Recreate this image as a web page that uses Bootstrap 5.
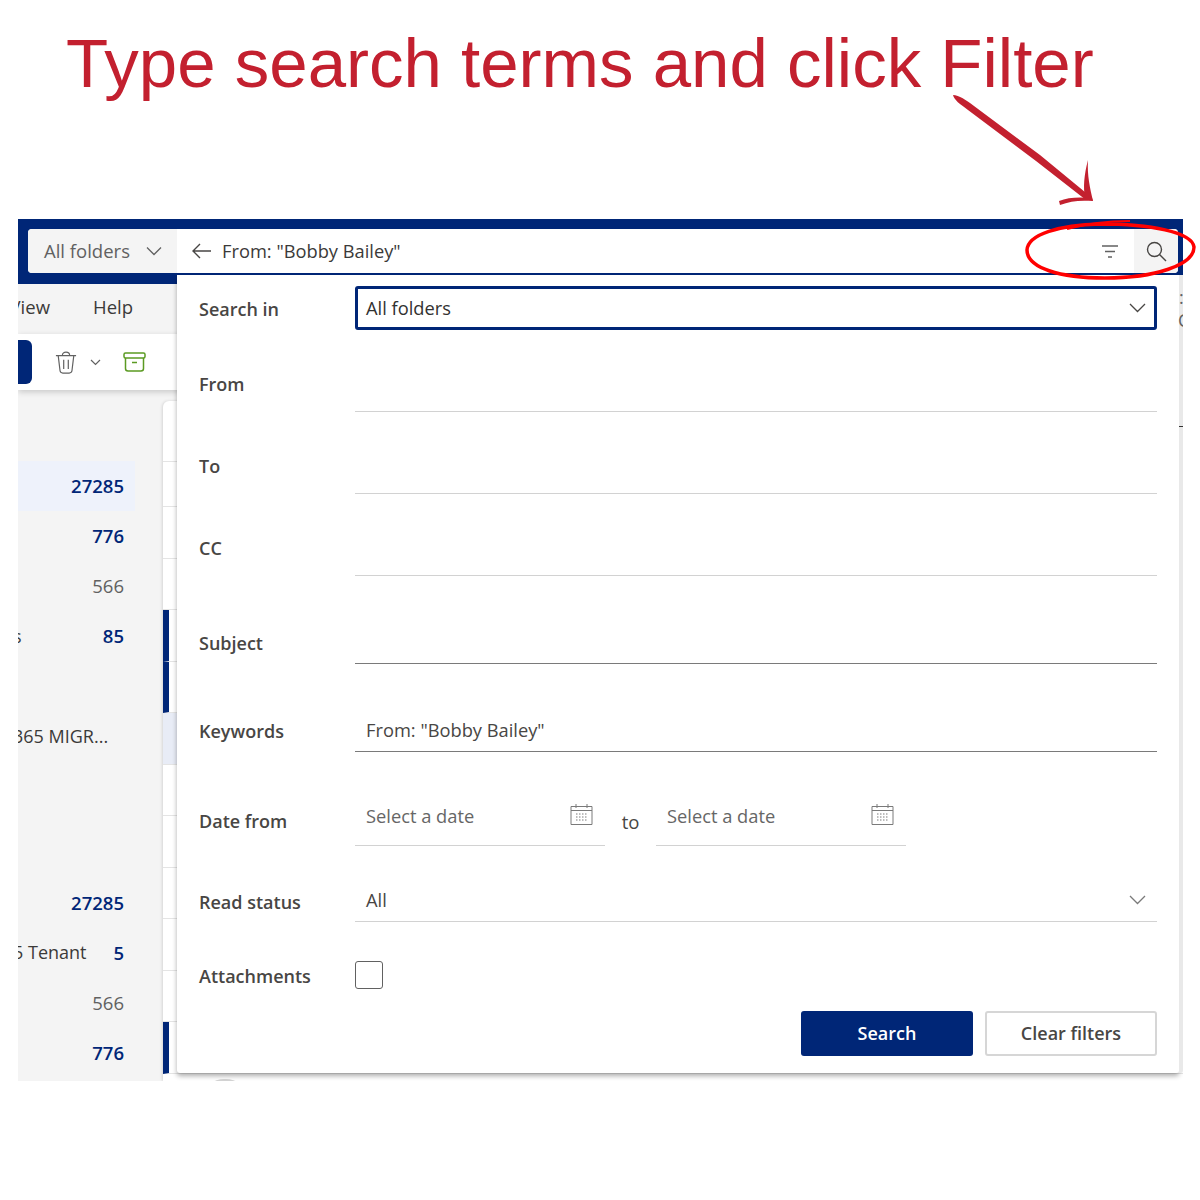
<!DOCTYPE html>
<html lang="en">
<head>
  <meta charset="UTF-8" />
  <meta name="viewport" content="width=device-width, initial-scale=1.0"/>
  <title>Type search terms and click Filter</title>
  <link href="https://cdn.jsdelivr.net/npm/bootstrap@5.3.3/dist/css/bootstrap.min.css" rel="stylesheet"/>
  <style>
    body {
      font-family: "Open Sans", "Noto Sans", sans-serif;
      background: #fff;
      color: #323130;
      height: 1200px;
      overflow: hidden;
    }
    .page-head {
      height: 219px;
      padding: 22px 0 0 66px;
      font-family: "Liberation Sans", Arial, sans-serif;
      font-size: 69px;
      line-height: 84px;
      color: #c3202f;
      white-space: nowrap;
    }
    .app-shot {
      position: relative;
      width: 1165px;
      height: 862px;
      margin-left: 18px;
      overflow: hidden;
      background: #f4f4f4;
    }
    .top-bar {
      height: 65px;
      padding: 10px 5px 11px 10px;
      background: #002677;
    }
    .search-box {
      height: 44px;
      border-radius: 4px;
      overflow: hidden;
      background: #fff;
    }
    .scope-btn {
      width: 149px;
      padding-left: 16px;
      background: #f4f4f4;
      color: #616161;
      font-size: 18.5px;
    }
    .query-text {
      padding-left: 15px;
      font-size: 18.3px;
      color: #3b3a39;
    }
    .query-value { margin-left: 2px; }
    .search-go {
      width: 44px;
      background: #f4f4f4;
    }
    .tab-row {
      height: 50px;
      padding-top: 9px;
      font-size: 18.5px;
      color: #3b3a39;
    }
    .tab-view {
      width: 32px;
      display: flex;
      justify-content: flex-end;
    }
    .tab-help { margin-left: 43px; }
    .tool-row {
      height: 56px;
      background: #fff;
      box-shadow: 0 2px 6px rgba(0, 0, 0, .18);
      position: relative;
    }
    .new-mail {
      width: 14px;
      height: 44px;
      background: #002677;
      border-radius: 0 6px 6px 0;
    }
    .tool-trash { margin-left: 23px; }
    .tool-caret { margin-left: 13px; }
    .tool-archive { margin-left: 22px; }
    .body-row { height: 691px; }
    .folder-pane { width: 145px; padding-top: 70.500px; }
    .folder-item {
      width: 117px;
      height: 50.2px;
      padding-right: 11px;
      font-size: 18px;
      color: #3b3a39;
      white-space: nowrap;
    }
    .folder-item.is-active { background: #eef2fb; }
    .folder-gap { height: 116px; }
    .folder-cut { margin-left: -5px; }
    .folder-tail {
      display: inline-block;
      width: 4px;
      overflow: hidden;
    }
    .unread { color: #002677; font-weight: 600; font-size: 18.5px; }
    .muted-count { color: #616161; font-size: 18.5px; }
    .mail-list {
      margin-top: 11px;
      background: #fff;
      border-radius: 6px 0 0 0;
      box-shadow: -1px 0 3px rgba(0, 0, 0, .12);
    }
    .mail-row {
      height: 51.5px;
      border-bottom: 1px solid #e4e4e4;
    }
    .mail-row.is-tall { height: 61px; }
    .mail-row.is-short { height: 45px; }
    .mail-row.is-flagged { border-left: 6px solid #002677; }
    .mail-row.is-picked { background: #e8ecf6; }
    .peek-arc {
      position: absolute;
      left: 195px;
      top: 860px;
      width: 24px;
      height: 8px;
      border-radius: 50%;
      background: #d4d4d4;
    }
    .edge-bits {
      position: absolute;
      left: 1160px;
      font-size: 18px;
      line-height: 20px;
      color: #616161;
    }
    .edge-top { top: 68px; left: 1161px; }
    .edge-low { top: 91px; }
    .edge-dash {
      position: absolute;
      left: 1161px;
      top: 207px;
      width: 4px;
      height: 1px;
      background: #333;
    }
    .filter-panel {
      position: absolute;
      left: 159px;
      top: 56px;
      width: 1002px;
      height: 798px;
      background: #fff;
      border-radius: 0 0 3px 3px;
      box-shadow: 4px 0 0 #e9e9e9, 0 3px 5px rgba(0, 0, 0, .32);
      padding: 0 22px 0 22px;
    }
    .field-row {
      display: flex;
      align-items: flex-end;
      color: #484644;
    }
    .rh-67 { height: 67px; }
    .rh-70 { height: 70px; }
    .rh-76 { height: 76px; }
    .rh-82 { height: 82px; }
    .rh-88 { height: 88px; }
    .rh-89 { height: 89px; }
    .rh-94 { height: 94px; }
    .field-name {
      width: 156px;
      flex: none;
      font-size: 18px;
      line-height: 28px;
      font-weight: 600;
      color: #484644;
    }
    .lbl-first { padding-bottom: 19px; }
    .lbl-high { padding-bottom: 14px; }
    .lbl-mid { padding-bottom: 11px; }
    .lbl-low { padding-bottom: 7px; }
    .lbl-read { padding-bottom: 6px; }
    .lbl-check { padding-bottom: 21px; }
    .field-main {
      flex: 1;
      align-self: stretch;
      min-width: 0;
      display: flex;
      align-items: center;
      padding: 0 11px;
      font-size: 18.3px;
      border-bottom: 1px solid #d2d2d2;
    }
    .field-main.is-dark { border-bottom-color: #7a7a7a; }
    .field-main.is-focus {
      align-self: flex-start;
      height: 44px;
      margin-top: 11px;
      border: 3px solid #002677;
      border-radius: 3px;
      padding: 0 8px;
      color: #323130;
    }
    .date-input {
      width: 250px;
      flex: none;
      color: #666;
      justify-content: space-between;
      padding-right: 12px;
    }
    .date-sep {
      width: 51px;
      flex: none;
      text-align: center;
      font-size: 18.5px;
      padding-bottom: 10px;
      color: #484644;
    }
    .fake-check {
      width: 28px;
      height: 28px;
      margin-bottom: 22px;
      border: 1.5px solid #616161;
      border-radius: 3px;
    }
    .btn-search, .btn-clear {
      width: 172px;
      height: 45px;
      padding: 0;
      font-size: 18px;
      font-weight: 600;
      border-radius: 3px;
    }
    .btn-search { background: #002677; color: #fff; border: 0; }
    .btn-clear { background: #fff; color: #484644; border: 2px solid #d6d6d6; }
    .ink-layer {
      position: absolute;
      left: 0;
      top: 0;
      pointer-events: none;
    }
  </style>
</head>
<body>
  <div class="page-head">Type search terms and click Filter</div>

  <div class="app-shot">
    <!-- search bar -->
    <div class="top-bar">
      <div class="search-box d-flex align-items-stretch">
        <div class="scope-btn d-flex align-items-center">
          <span>All folders</span>
          <svg class="ms-3" width="16" height="10" viewBox="0 0 16 10" fill="none" stroke="#616161" stroke-width="1.3"><path d="M1 1.500 8 8.500 15 1.500"/></svg>
        </div>
        <div class="query-text flex-grow-1 d-flex align-items-center gap-2">
          <svg width="20" height="16" viewBox="0 0 20 16" fill="none" stroke="#484644" stroke-width="1.4"><path d="M8 1 1 8l7 7M1 8h18"/></svg>
          <span class="query-value">From: "Bobby Bailey"</span>
        </div>
        <div class="d-flex align-items-center pe-3">
          <svg width="16" height="13" viewBox="0 0 16 13" fill="none" stroke="#616161" stroke-width="1.4"><path d="M0 1h16M3 6.500h10M6 12h4"/></svg>
        </div>
        <div class="search-go d-flex align-items-center justify-content-center">
          <svg width="21" height="21" viewBox="0 0 21 21" fill="none" stroke="#484644" stroke-width="1.4"><circle cx="8.500" cy="8.500" r="7"/><path d="m13.500 13.500 6.500 6.500"/></svg>
        </div>
      </div>
    </div>

    <!-- ribbon -->
    <div class="tab-row d-flex">
      <div class="tab-view"><span>View</span></div>
      <span class="tab-help">Help</span>
    </div>
    <div class="tool-row d-flex align-items-center">
      <div class="new-mail"></div>
      <svg class="tool-trash" width="22" height="25" viewBox="0 0 24 25" fill="none" stroke="#616161" stroke-width="1.3"><path d="M1 5h22M8 5c0-5 8-5 8 0M3.500 5l2 16.500q.4 2.500 3 2.500h7q2.600 0 3-2.500l2-16.500M9.500 9.500v10M14.500 9.500v10"/></svg>
      <svg class="tool-caret" width="11" height="7" viewBox="0 0 11 7" fill="none" stroke="#616161" stroke-width="1.2"><path d="m1 1 4.500 4.500L10 1"/></svg>
      <svg class="tool-archive" width="23" height="20" viewBox="0 0 23 20" fill="none" stroke="#5b9a22" stroke-width="1.500"><rect x="1" y="1" width="21" height="5" rx="1.500"/><path d="M2.500 6v10.500q0 2.500 2.500 2.500h13q2.500 0 2.500-2.500V6M9 10.500h5"/></svg>
    </div>

    <!-- folders and message list -->
    <div class="body-row d-flex">
      <div class="folder-pane flex-shrink-0">
        <div class="folder-item is-active d-flex align-items-center justify-content-end unread">27285</div>
        <div class="folder-item d-flex align-items-center justify-content-end unread">776</div>
        <div class="folder-item d-flex align-items-center justify-content-end muted-count">566</div>
        <div class="folder-item d-flex align-items-center justify-content-between"><span class="folder-tail"><span class="folder-cut d-inline-block">s</span></span><span class="unread">85</span></div>
        <div class="folder-item"></div>
        <div class="folder-item d-flex align-items-center"><span class="folder-cut">365 MIGR...</span></div>
        <div class="folder-gap"></div>
        <div class="folder-item d-flex align-items-center justify-content-end unread">27285</div>
        <div class="folder-item d-flex align-items-center justify-content-between"><span class="folder-cut">5 Tenant</span><span class="unread">5</span></div>
        <div class="folder-item d-flex align-items-center justify-content-end muted-count">566</div>
        <div class="folder-item d-flex align-items-center justify-content-end unread">776</div>
      </div>
      <div class="mail-list flex-grow-1">
        <div class="mail-row is-tall"></div>
        <div class="mail-row is-short"></div>
        <div class="mail-row"></div>
        <div class="mail-row"></div>
        <div class="mail-row is-flagged"></div>
        <div class="mail-row is-flagged"></div>
        <div class="mail-row is-picked"></div>
        <div class="mail-row"></div>
        <div class="mail-row"></div>
        <div class="mail-row"></div>
        <div class="mail-row"></div>
        <div class="mail-row"></div>
        <div class="mail-row is-flagged"></div>
      </div>
    </div>
    <div class="peek-arc"></div>

    <!-- filter dropdown -->
    <div class="filter-panel">
      <div class="field-row rh-67">
        <div class="field-name lbl-first">Search in</div>
        <div class="field-main is-focus justify-content-between">
          <span>All folders</span>
          <svg width="17" height="10" viewBox="0 0 17 10" fill="none" stroke="#484644" stroke-width="1.3"><path d="m1 1 7.500 7.500L16 1"/></svg>
        </div>
      </div>
      <div class="field-row rh-70">
        <div class="field-name lbl-high">From</div>
        <div class="field-main"></div>
      </div>
      <div class="field-row rh-82">
        <div class="field-name lbl-high">To</div>
        <div class="field-main"></div>
      </div>
      <div class="field-row rh-82">
        <div class="field-name lbl-high">CC</div>
        <div class="field-main"></div>
      </div>
      <div class="field-row rh-88">
        <div class="field-name lbl-low">Subject</div>
        <div class="field-main is-dark"></div>
      </div>
      <div class="field-row rh-88">
        <div class="field-name lbl-low">Keywords</div>
        <div class="field-main is-dark align-items-end pb-2">From: "Bobby Bailey"</div>
      </div>
      <div class="field-row rh-94">
        <div class="field-name lbl-mid">Date from</div>
        <div class="field-main date-input align-items-end pb-3">
          <span>Select a date</span>
          <svg class="mb-1" width="23" height="22" viewBox="0 0 23 22" fill="none" stroke="#7a7a7a"><path d="M1 3.500h21v18H1zM1 7.500h21M6 1v4M17 1v4"/><path d="M6 11h11M6 14h11M6 17h11" stroke-dasharray="1.500 1.500"/></svg>
        </div>
        <div class="date-sep">to</div>
        <div class="field-main date-input align-items-end pb-3">
          <span>Select a date</span>
          <svg class="mb-1" width="23" height="22" viewBox="0 0 23 22" fill="none" stroke="#7a7a7a"><path d="M1 3.500h21v18H1zM1 7.500h21M6 1v4M17 1v4"/><path d="M6 11h11M6 14h11M6 17h11" stroke-dasharray="1.500 1.500"/></svg>
        </div>
      </div>
      <div class="field-row rh-76">
        <div class="field-name lbl-read">Read status</div>
        <div class="field-main align-items-end justify-content-between pb-2">
          <span>All</span>
          <svg class="mb-2" width="17" height="10" viewBox="0 0 17 10" fill="none" stroke="#7a7a7a" stroke-width="1.3"><path d="m1 1 7.500 7.500L16 1"/></svg>
        </div>
      </div>
      <div class="field-row rh-89">
        <div class="field-name lbl-check">Attachments</div>
        <div class="fake-check"></div>
      </div>
      <div class="d-flex justify-content-end gap-2">
        <button class="btn btn-search">Search</button>
        <button class="btn btn-clear ms-1">Clear filters</button>
      </div>
    </div>

    <!-- bits of the page that stick out beside the dropdown -->
    <span class="edge-bits edge-top">:</span>
    <span class="edge-bits edge-low">C</span>
    <div class="edge-dash"></div>
  </div>

  <!-- hand drawn annotation over the screenshot -->
  <svg class="ink-layer" width="1200" height="1200" viewBox="0 0 1200 1200" fill="none">
    <g fill="#c3202f">
      <path d="M953 95 C959 95 966 100 974 106 L1040 155 L1091 197 L1086 200 L1036 161 L968 110 C960 104 954 100 953 95Z"/>
      <path d="M1088 160 C1084 175 1083 188 1085 197 L1093 201 C1090 188 1087 175 1088 160Z"/>
      <path d="M1059 201 C1068 197 1080 197 1092 198 L1093 201 C1080 200 1070 201 1060 205Z"/>
    </g>
    <g stroke="#f00" stroke-width="3.500">
      <path d="M1100 224 C1060 225 1028 234 1027 250 C1027 268 1060 278 1105 278 C1155 278 1194 265 1194 247 C1192 232 1150 224 1100 224"/>
      <path d="M1130 221 C1105 221 1085 224 1067 229" stroke-width="2"/>
    </g>
  </svg>

  <script src="https://cdn.jsdelivr.net/npm/bootstrap@5.3.3/dist/js/bootstrap.bundle.min.js"></script>
</body>
</html>
